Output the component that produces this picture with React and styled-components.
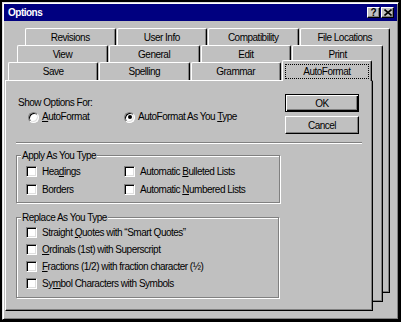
import React from 'react';
import styled, { createGlobalStyle, css } from 'styled-components';

const GlobalStyle = createGlobalStyle`
  html, body {
    margin: 0;
    background: #000;
  }
  body {
    font-family: "Liberation Sans", Arial, sans-serif;
    font-size: 10px;
    letter-spacing: -0.5px;
    color: #000;
  }
`;

const tabRows = [
  { top: 0, left: 20, width: 365, rowHeight: 18, bodyHeight: 247, indent: 0, tabs: ['Revisions', 'User Info', 'Compatibility', 'File Locations'] },
  { top: 17, left: 12, width: 366, rowHeight: 17, bodyHeight: 240, indent: 0, tabs: ['View', 'General', 'Edit', 'Print'] },
];

const frontTabs = ['Save', 'Spelling', 'Grammar', 'AutoFormat'];

const applyItems = [
  { text: 'Headings', u: 3 },
  { text: 'Automatic Bulleted Lists', u: 10 },
  { text: 'Borders', u: -1 },
  { text: 'Automatic Numbered Lists', u: 10 },
];

const replaceItems = [
  { text: 'Straight Quotes with \u201cSmart Quotes\u201d', u: 9 },
  { text: 'Ordinals (1st) with Superscript', u: 0 },
  { text: 'Fractions (1/2) with fraction character (\u00bd)', u: 0 },
  { text: 'Symbol Characters with Symbols', u: 2 },
];

// Label with the keyboard-shortcut letter underlined
const Mnemonic = ({ text, u }) => {
  if (u < 0) return <span>{text}</span>;
  return (
    <span>
      {text.slice(0, u)}
      <Under>{text[u]}</Under>
      {text.slice(u + 1)}
    </span>
  );
};

export default function App() {
  return (
    <>
      <GlobalStyle />
      <Window>
        <TitleBar>
          <Title>Options</Title>
          <CaptionButtons>
            <CaptionButton>?</CaptionButton>
            <CaptionButton>
              <svg width="8" height="7" viewBox="0 0 8 7">
                <path d="M0.5 0.5 L7.5 6.5 M7.5 0.5 L0.5 6.5" stroke="#000" strokeWidth="1.6" />
              </svg>
            </CaptionButton>
          </CaptionButtons>
        </TitleBar>

        <Sheets>
          {tabRows.map((row, i) => (
            <Sheet key={i} $top={row.top} $left={row.left} $width={row.width}>
              <TabRow $h={row.rowHeight} $indent={row.indent}>
                {row.tabs.map(t => <Tab key={t}>{t}</Tab>)}
              </TabRow>
              <SheetBody $h={row.bodyHeight} />
            </Sheet>
          ))}

          <Sheet $top={34} $left={0} $width={368}>
            <TabRow $h={18} $indent={3} $end={1}>
              {frontTabs.map(t => (
                <Tab key={t} $active={t === 'AutoFormat'}>
                  {t === 'AutoFormat' ? <FocusRing>{t}</FocusRing> : t}
                </Tab>
              ))}
            </TabRow>
            <SheetBody $h={231} $front>
              <TopSection>
                <OptionsColumn>
                  <Line>Show Options For:</Line>
                  <RadioRow>
                    <RadioItem $w={96}>
                      <Radio />
                      <Mnemonic text="AutoFormat" u={0} />
                    </RadioItem>
                    <RadioItem>
                      <Radio $checked />
                      <Mnemonic text="AutoFormat As You Type" u={18} />
                    </RadioItem>
                  </RadioRow>
                </OptionsColumn>
                <ButtonColumn>
                  <Button $default>OK</Button>
                  <Button>Cancel</Button>
                </ButtonColumn>
              </TopSection>

              <Separator />

              <GroupBox $mt={5} $w={264} $pb={4}>
                <Legend>Apply As You Type</Legend>
                <CheckGrid>
                  {applyItems.map(item => (
                    <CheckItem key={item.text} $h={18}>
                      <CheckBox />
                      <Mnemonic text={item.text} u={item.u} />
                    </CheckItem>
                  ))}
                </CheckGrid>
              </GroupBox>

              <GroupBox $mt={8} $w={263} $pb={5}>
                <Legend>Replace As You Type</Legend>
                <CheckList>
                  {replaceItems.map(item => (
                    <CheckItem key={item.text} $h={17}>
                      <CheckBox />
                      <Mnemonic text={item.text} u={item.u} />
                    </CheckItem>
                  ))}
                </CheckList>
              </GroupBox>
            </SheetBody>
          </Sheet>
        </Sheets>
      </Window>
    </>
  );
}

const Window = styled.div`
  margin: 2px;
  width: 397px;
  height: 318px;
  box-sizing: border-box;
  padding: 1px;
  background: #c0c0c0;
  border: 1px solid;
  border-color: #dfdfdf #000 #000 #dfdfdf;
  box-shadow: inset 1px 1px #fff, inset -1px -1px #808080;
`;

const TitleBar = styled.div`
  height: 17px;
  display: flex;
  align-items: center;
  padding: 0 3px 0 4px;
  background: #000080;
`;

const Title = styled.span`
  color: #fff;
  font-weight: bold;
  font-size: 10px;
`;

const CaptionButtons = styled.div`
  margin-left: auto;
  display: flex;
  gap: 1px;
`;

const CaptionButton = styled.div`
  width: 13px;
  height: 11px;
  box-sizing: border-box;
  display: flex;
  align-items: center;
  justify-content: center;
  background: #c0c0c0;
  border: 1px solid;
  border-color: #fff #000 #000 #fff;
  box-shadow: inset -1px -1px #808080;
  font-weight: bold;
  font-size: 10px;
  letter-spacing: 0;
  line-height: 1;
`;

const Sheets = styled.div`
  display: grid;
  margin: 7px 0 0 1px;
`;

const Sheet = styled.div`
  grid-area: 1 / 1;
  display: flex;
  flex-direction: column;
  margin-top: ${p => p.$top}px;
  margin-left: ${p => p.$left}px;
  width: ${p => p.$width}px;
`;

const TabRow = styled.div`
  display: grid;
  grid-template-columns: repeat(4, 1fr);
  column-gap: 1px;
  height: ${p => p.$h}px;
  padding-left: ${p => p.$indent}px;
  padding-right: ${p => p.$end || 0}px;
`;

const Tab = styled.div`
  box-sizing: border-box;
  display: flex;
  align-items: center;
  justify-content: center;
  background: #c0c0c0;
  border-top: 1px solid #fff;
  border-left: 1px solid #fff;
  border-right: 1px solid #000;
  box-shadow: inset -1px 0 #808080;
  border-radius: 2px 2px 0 0;
  white-space: nowrap;
  ${p => p.$active && css`
    z-index: 1;
    margin: -2px 0 -1px;
    padding: 0 0 1px;
  `}
`;

const FocusRing = styled.span`
  align-self: stretch;
  flex: 1;
  display: flex;
  align-items: center;
  justify-content: center;
  margin: 3px 2px 1px 2px;
  border: 1px dotted #000;
`;

const SheetBody = styled.div`
  box-sizing: border-box;
  height: ${p => p.$h}px;
  background: #c0c0c0;
  border-left: 1px solid #fff;
  border-right: 1px solid #000;
  border-bottom: 1px solid #000;
  box-shadow: inset -1px -1px #808080;
  ${p => p.$front && css`
    border-top: 1px solid #fff;
    padding: 13px 10px 0 10px;
  `}
`;

const TopSection = styled.div`
  display: flex;
  justify-content: space-between;
  align-items: flex-start;
  height: 40px;
`;

const OptionsColumn = styled.div`
  padding: 2px 0 0 2px;
`;

const Line = styled.div`
  line-height: 14px;
`;

const RadioRow = styled.div`
  display: flex;
  margin-left: 10px;
  line-height: 14px;
`;

const RadioItem = styled.label`
  display: flex;
  align-items: center;
  gap: 3px;
  width: ${p => (p.$w ? `${p.$w}px` : 'auto')};
`;

const Radio = styled.span`
  width: 11px;
  height: 11px;
  box-sizing: border-box;
  border-radius: 50%;
  display: flex;
  align-items: center;
  justify-content: center;
  background: #fff;
  border: 1px solid;
  border-color: #808080 #fff #fff #808080;
  box-shadow: inset 1px 1px #000, inset -1px -1px #dfdfdf;
  &::after {
    content: '';
    width: 4px;
    height: 4px;
    border-radius: 50%;
    background: ${p => (p.$checked ? '#000' : 'transparent')};
  }
`;

const ButtonColumn = styled.div`
  display: flex;
  flex-direction: column;
  gap: 4px;
  margin-right: 3px;
`;

const Button = styled.div`
  width: 74px;
  height: 18px;
  box-sizing: border-box;
  display: flex;
  align-items: center;
  justify-content: center;
  background: #c0c0c0;
  border: 1px solid;
  ${p => (p.$default
    ? css`
      border-color: #000;
      box-shadow: inset 1px 1px #fff, inset -1px -1px #000, inset -2px -2px #808080;
    `
    : css`
      border-color: #fff #000 #000 #fff;
      box-shadow: inset -1px -1px #808080;
    `)}
`;

const Separator = styled.div`
  margin-top: 8px;
  border-top: 1px solid #808080;
  border-bottom: 1px solid #fff;
`;

const GroupBox = styled.fieldset`
  margin: ${p => p.$mt}px 0 0;
  width: ${p => p.$w}px;
  box-sizing: border-box;
  min-inline-size: 0;
  padding: 0 0 ${p => p.$pb}px 4px;
  border: 1px solid #808080;
  box-shadow: inset 1px 1px #fff, 1px 1px #fff;
`;

const Legend = styled.legend`
  padding: 0 1px;
  line-height: 13px;
  background: #c0c0c0;
`;

const CheckGrid = styled.div`
  display: grid;
  grid-template-columns: 98px auto;
  margin-left: 5px;
`;

const CheckList = styled.div`
  display: flex;
  flex-direction: column;
  margin-left: 5px;
`;

const CheckItem = styled.label`
  display: flex;
  align-items: center;
  gap: 5px;
  height: ${p => p.$h}px;
  white-space: nowrap;
`;

const CheckBox = styled.span`
  flex: none;
  width: 11px;
  height: 11px;
  box-sizing: border-box;
  background: #fff;
  border: 1px solid;
  border-color: #808080 #fff #fff #808080;
  box-shadow: inset 1px 1px #000, inset -1px -1px #dfdfdf;
`;

const Under = styled.span`
  text-decoration: underline;
`;
